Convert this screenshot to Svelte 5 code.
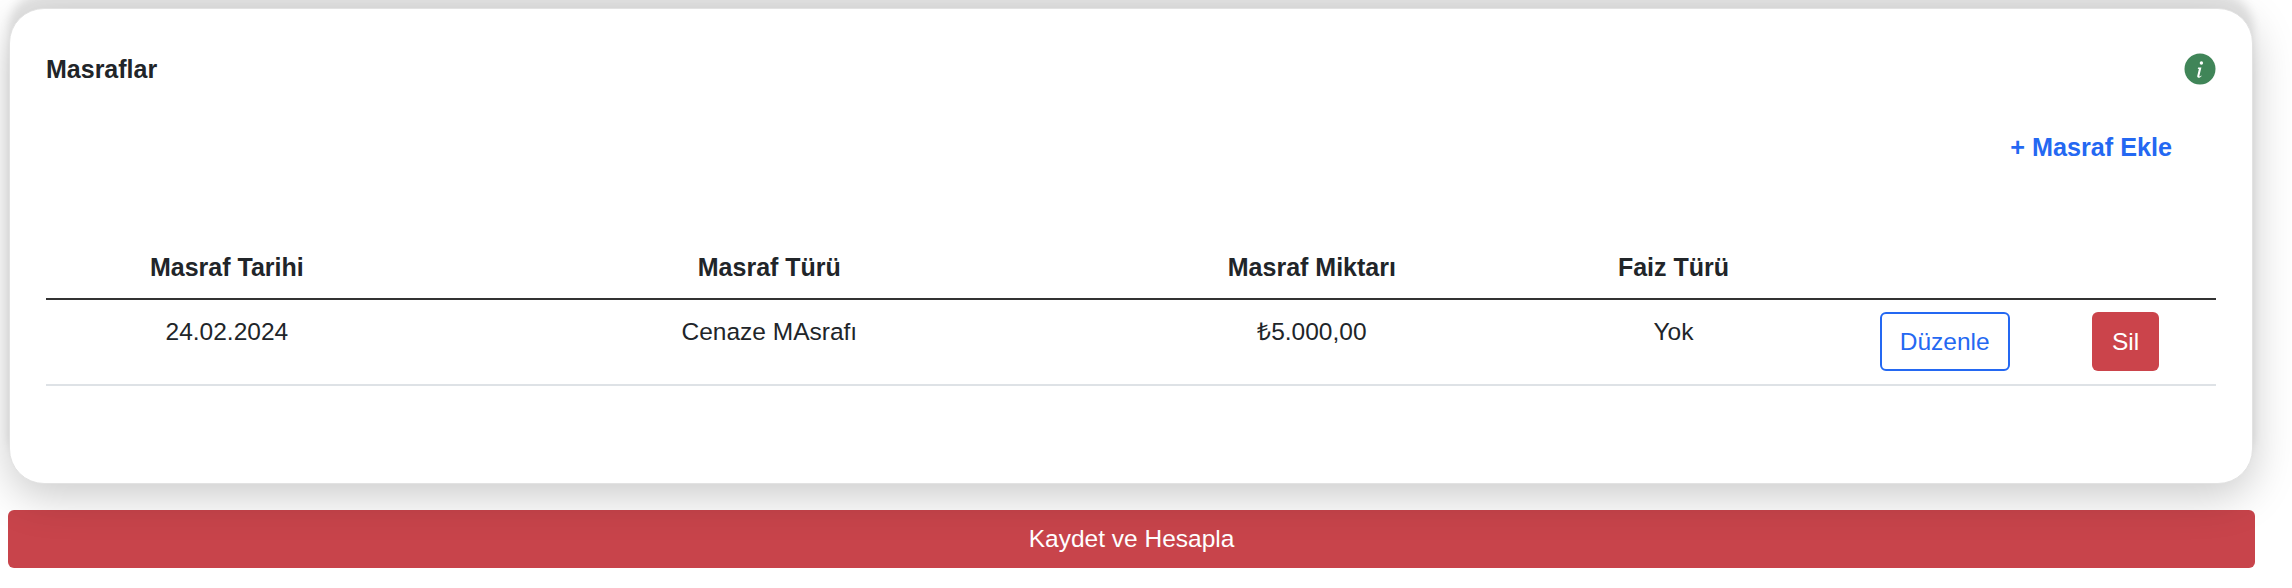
<script lang="ts">
	const expenses = [
		{ date: '24.02.2024', type: 'Cenaze MAsrafı', amount: '₺5.000,00', interest: 'Yok' }
	];
	const headers = ['Masraf Tarihi', 'Masraf Türü', 'Masraf Miktarı', 'Faiz Türü', '', ''];
</script>

<main class="page">
	<section class="card">
		<div class="card-head">
			<h2>Masraflar</h2>
			<span class="info" aria-label="Bilgi">
				<svg viewBox="0 0 32 32" width="32" height="32">
					<circle cx="16" cy="16" r="15.5" fill="#408558" />
					<circle cx="17.4" cy="10" r="1.7" fill="#fff" />
					<path
						d="M14.2 14.4h3.2l-2 8.4c-.2.7.4.9.9.5l1-.8.3.4c-.9 1.1-1.9 1.8-3 1.8-1.1 0-1.6-.8-1.3-1.9l1.6-6.8-1.2-.3z"
						fill="#fff"
					/>
				</svg>
			</span>
		</div>

		<div class="actions">
			<button class="add">+ Masraf Ekle</button>
		</div>

		<div class="table">
			<div class="row head">
				{#each headers as header}
					<div class="cell">{header}</div>
				{/each}
			</div>
			{#each expenses as item}
				<div class="row body">
					<div class="cell">{item.date}</div>
					<div class="cell">{item.type}</div>
					<div class="cell">{item.amount}</div>
					<div class="cell">{item.interest}</div>
					<div class="cell"><button class="edit">Düzenle</button></div>
					<div class="cell"><button class="remove">Sil</button></div>
				</div>
			{/each}
		</div>
	</section>

	<button class="submit">Kaydet ve Hesapla</button>
</main>

<style>
	:global(body) {
		margin: 0;
		background: #fff;
		overflow: hidden;
	}

	.page {
		height: 588px;
		overflow: hidden;
		font-family: 'Liberation Sans', Arial, sans-serif;
		font-size: 24.5px;
		color: #212529;
		padding: 8px 37px 0 8px;
		box-sizing: border-box;
	}

	button {
		font-family: inherit;
		font-size: 24.5px;
		cursor: pointer;
	}

	.card {
		position: relative;
		z-index: 1;
		height: 476px;
		margin: 0 2px 0 1px;
		padding: 44px 36px 0;
		box-sizing: border-box;
		background: #fff;
		border: 1px solid #e2e2e2;
		border-radius: 35px;
		box-shadow:
			0 12px 44px rgba(0, 0, 0, 0.21),
			0 -16px 10px rgba(0, 0, 0, 0.1);
	}

	.card-head {
		display: flex;
		justify-content: space-between;
		align-items: center;
		height: 32px;
	}

	h2 {
		margin: 0;
		font-size: 25px;
		font-weight: 700;
	}

	.info {
		display: block;
		height: 32px;
	}

	.actions {
		display: flex;
		justify-content: flex-end;
		padding: 40px 44px 0 0;
	}

	.add {
		border: 0;
		background: none;
		padding: 8px 0;
		color: #2468f2;
		font-size: 25.2px;
		font-weight: 700;
	}

	.table {
		margin-top: 83px;
	}

	.row {
		display: grid;
		grid-template-columns: 2fr 4fr 2fr 2fr 1fr 1fr;
		text-align: center;
	}

	.head {
		font-size: 25px;
		font-weight: 700;
		padding-bottom: 16px;
		border-bottom: 2px solid #333;
	}

	.body {
		height: 86px;
		padding-top: 12px;
		box-sizing: border-box;
		border-bottom: 2px solid #dee2e6;
	}

	.body .cell {
		line-height: 40px;
	}

	.edit,
	.remove {
		height: 59px;
		padding: 0 18px;
		border-radius: 6px;
		vertical-align: top;
	}

	.edit {
		background: #fff;
		border: 2px solid #2468f2;
		color: #2468f2;
	}

	.remove {
		padding: 0 20px;
		background: #cb444b;
		border: 0;
		color: #fff;
	}

	.submit {
		display: block;
		width: 100%;
		height: 58px;
		margin-top: 26px;
		background: #c8444b;
		border: 0;
		border-radius: 6px;
		color: #fff;
	}
</style>
